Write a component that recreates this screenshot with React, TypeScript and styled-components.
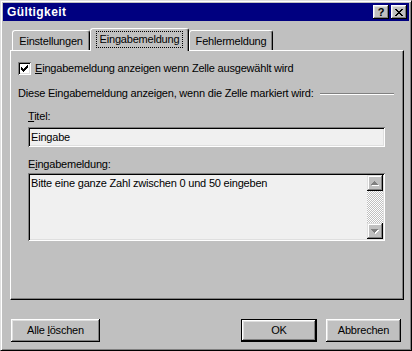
import React from 'react'
import styled, { createGlobalStyle } from 'styled-components'

const GlobalStyle = createGlobalStyle`
  html, body {
    margin: 0;
    padding: 0;
    background: #c0c0c0;
  }
  body {
    font-family: "Liberation Sans", Arial, sans-serif;
    font-size: 11px;
    letter-spacing: -0.2px;
    color: #000;
  }
`

const FACE = '#c0c0c0'
const LIGHT = '#dfdfdf'
const SHADOW = '#808080'

const Window = styled.div`
  width: 412px;
  height: 351px;
  box-sizing: border-box;
  background: ${FACE};
  border: 1px solid;
  border-color: ${LIGHT} #000 #000 ${LIGHT};
  box-shadow: inset 1px 1px #fff, inset -1px -1px ${SHADOW};
  padding: 2px;
  display: flex;
  flex-direction: column;
`

const TitleBar = styled.div`
  height: 18px;
  background: #000080;
  color: #fff;
  display: flex;
  align-items: center;
  justify-content: space-between;
  padding: 0 2px 0 4px;
`

const TitleText = styled.span`
  font-weight: bold;
  font-size: 12px;
  letter-spacing: 0.4px;
`

const CaptionButtons = styled.div`
  display: flex;
  gap: 2px;
`

const CaptionButton = styled.div`
  width: 16px;
  height: 14px;
  box-sizing: border-box;
  background: ${FACE};
  box-shadow: inset -1px -1px #000, inset 1px 1px #fff, inset -2px -2px ${SHADOW}, inset 2px 2px ${LIGHT};
  display: flex;
  align-items: center;
  justify-content: center;
  color: #000;
  font-weight: bold;
  font-size: 11px;
  line-height: 14px;
`

const Body = styled.div`
  flex: 1;
  display: flex;
  flex-direction: column;
  padding: 7px 5px 0 7px;
`

const TabStrip = styled.div`
  display: flex;
  align-items: flex-end;
  height: 22px;
  padding-left: 2px;
  position: relative;
  z-index: 1;
`

const Tab = styled.div<{ $w: number; $active?: boolean }>`
  width: ${p => p.$w}px;
  height: ${p => (p.$active ? 23 : 20)}px;
  margin-bottom: ${p => (p.$active ? -1 : 0)}px;
  box-sizing: border-box;
  background: ${FACE};
  border-top: 1px solid #fff;
  border-left: 1px solid #fff;
  border-right: 1px solid #000;
  border-top-left-radius: 3px;
  border-top-right-radius: 3px;
  box-shadow: inset -1px 0 ${SHADOW};
  display: flex;
  justify-content: center;
  padding-top: 3px;
`

const FocusLabel = styled.span`
  outline: 1px dotted #000;
  outline-offset: 0;
  padding: 1px 3px;
  height: 13px;
  line-height: 13px;
`

const TabLabel = styled.span`
  line-height: 13px;
  padding: 1px 2px;
`

const Panel = styled.div`
  height: 250px;
  box-sizing: border-box;
  border: 1px solid;
  border-color: #fff #000 #000 #fff;
  box-shadow: inset -1px -1px ${SHADOW};
  padding: 11px 9px 0 7px;
  display: flex;
  flex-direction: column;
`

const CheckRow = styled.label`
  display: flex;
  align-items: center;
  gap: 4px;
  height: 13px;
  line-height: 13px;
`

const CheckBox = styled.span`
  width: 13px;
  height: 13px;
  box-sizing: border-box;
  background: #fff;
  box-shadow: inset 1px 1px ${SHADOW}, inset -1px -1px #fff, inset 2px 2px #000, inset -2px -2px ${LIGHT};
  display: flex;
  align-items: center;
  justify-content: center;
`

const GroupLine = styled.div`
  display: flex;
  align-items: center;
  gap: 6px;
  margin-top: 12px;
  height: 13px;
  line-height: 13px;
  white-space: nowrap;
`

const Etch = styled.div`
  flex: 1;
  height: 0;
  border-top: 1px solid ${SHADOW};
  border-bottom: 1px solid #fff;
`

const FieldLabel = styled.div<{ $top: number }>`
  margin: ${p => p.$top}px 0 0 10px;
  height: 13px;
  line-height: 13px;
`

const Sunken = styled.div<{ $h: number; $top: number }>`
  margin: ${p => p.$top}px 0 0 10px;
  width: 357px;
  height: ${p => p.$h}px;
  box-sizing: border-box;
  background: #f0f0f0;
  box-shadow: inset 1px 1px ${SHADOW}, inset -1px -1px #fff, inset 2px 2px #000, inset -2px -2px ${LIGHT};
  padding: 2px;
  display: flex;
`

const FieldText = styled.div`
  flex: 1;
  padding: 2px 1px;
  line-height: 13px;
`

const ScrollBar = styled.div`
  width: 16px;
  display: flex;
  flex-direction: column;
  background: repeating-conic-gradient(${FACE} 0 25%, #fff 0 50%) 0 0 / 2px 2px;
`

const ScrollButton = styled.div`
  width: 16px;
  height: 16px;
  box-sizing: border-box;
  background: ${FACE};
  box-shadow: inset -1px -1px #000, inset 1px 1px ${LIGHT}, inset -2px -2px ${SHADOW}, inset 2px 2px #fff;
  display: flex;
  align-items: center;
  justify-content: center;
`

const Spacer = styled.div`
  flex: 1;
`

const ButtonRow = styled.div`
  display: flex;
  margin-top: 19px;
  padding: 0 3px 0 1px;
  gap: 9px;
`

const Button = styled.div<{ $w: number; $default?: boolean }>`
  width: ${p => p.$w}px;
  height: 23px;
  box-sizing: border-box;
  background: ${FACE};
  border: ${p => (p.$default ? '1px solid #000' : 'none')};
  box-shadow: inset -1px -1px #000, inset 1px 1px #fff, inset -2px -2px ${SHADOW}, inset 2px 2px ${LIGHT};
  display: flex;
  align-items: center;
  justify-content: center;
  line-height: 13px;
`

const U = styled.span`
  text-decoration: underline;
`

const Px = ({ cells, color }: { cells: string[]; color: string }) => (
  <>
    {cells.flatMap((row, y) =>
      row.split('').map((c, x) =>
        c === 'X' ? <rect key={`${x}-${y}`} x={x} y={y} width={1} height={1} fill={color} /> : null
      )
    )}
  </>
)

const CHECK = ['......X', '.....XX', 'X...XXX', 'XX.XXX.', 'XXXXX..', '.XXX...', '..X....']
const CLOSE = ['XX....XX', '.XX..XX.', '..XXXX..', '...XX...', '..XXXX..', '.XX..XX.', 'XX....XX']
const UP = ['...X...', '..XXX..', '.XXXXX.', 'XXXXXXX']
const DOWN = ['XXXXXXX', '.XXXXX.', '..XXX..', '...X...']

const Arrow = ({ cells }: { cells: string[] }) => (
  <svg width={8} height={5} shapeRendering="crispEdges">
    <g transform="translate(1,1)">
      <Px cells={cells} color="#fff" />
    </g>
    <Px cells={cells} color={SHADOW} />
  </svg>
)

export default function App() {
  return (
    <>
      <GlobalStyle />
      <Window>
        <TitleBar>
          <TitleText>Gültigkeit</TitleText>
          <CaptionButtons>
            <CaptionButton>?</CaptionButton>
            <CaptionButton>
              <svg width={8} height={7} shapeRendering="crispEdges">
                <Px cells={CLOSE} color="#000" />
              </svg>
            </CaptionButton>
          </CaptionButtons>
        </TitleBar>
        <Body>
          <TabStrip>
            <Tab $w={78}>
              <TabLabel>Einstellungen</TabLabel>
            </Tab>
            <Tab $w={99} $active>
              <FocusLabel>Eingabemeldung</FocusLabel>
            </Tab>
            <Tab $w={84}>
              <TabLabel>Fehlermeldung</TabLabel>
            </Tab>
          </TabStrip>
          <Panel>
            <CheckRow>
              <CheckBox>
                <svg width={7} height={7} shapeRendering="crispEdges">
                  <Px cells={CHECK} color="#000" />
                </svg>
              </CheckBox>
              <span>
                <U>E</U>ingabemeldung anzeigen wenn Zelle ausgewählt wird
              </span>
            </CheckRow>
            <GroupLine>
              <span>Diese Eingabemeldung anzeigen, wenn die Zelle markiert wird:</span>
              <Etch />
            </GroupLine>
            <FieldLabel $top={10}>
              <U>T</U>itel:
            </FieldLabel>
            <Sunken $h={20} $top={4}>
              <FieldText>Eingabe</FieldText>
            </Sunken>
            <FieldLabel $top={11}>
              E<U>i</U>ngabemeldung:
            </FieldLabel>
            <Sunken $h={68} $top={2}>
              <FieldText>Bitte eine ganze Zahl zwischen 0 und 50 eingeben</FieldText>
              <ScrollBar>
                <ScrollButton>
                  <Arrow cells={UP} />
                </ScrollButton>
                <Spacer />
                <ScrollButton>
                  <Arrow cells={DOWN} />
                </ScrollButton>
              </ScrollBar>
            </Sunken>
          </Panel>
          <ButtonRow>
            <Button $w={89}>
              <span>
                Alle <U>l</U>öschen
              </span>
            </Button>
            <Spacer />
            <Button $w={76} $default>
              OK
            </Button>
            <Button $w={75}>Abbrechen</Button>
          </ButtonRow>
        </Body>
      </Window>
    </>
  )
}
